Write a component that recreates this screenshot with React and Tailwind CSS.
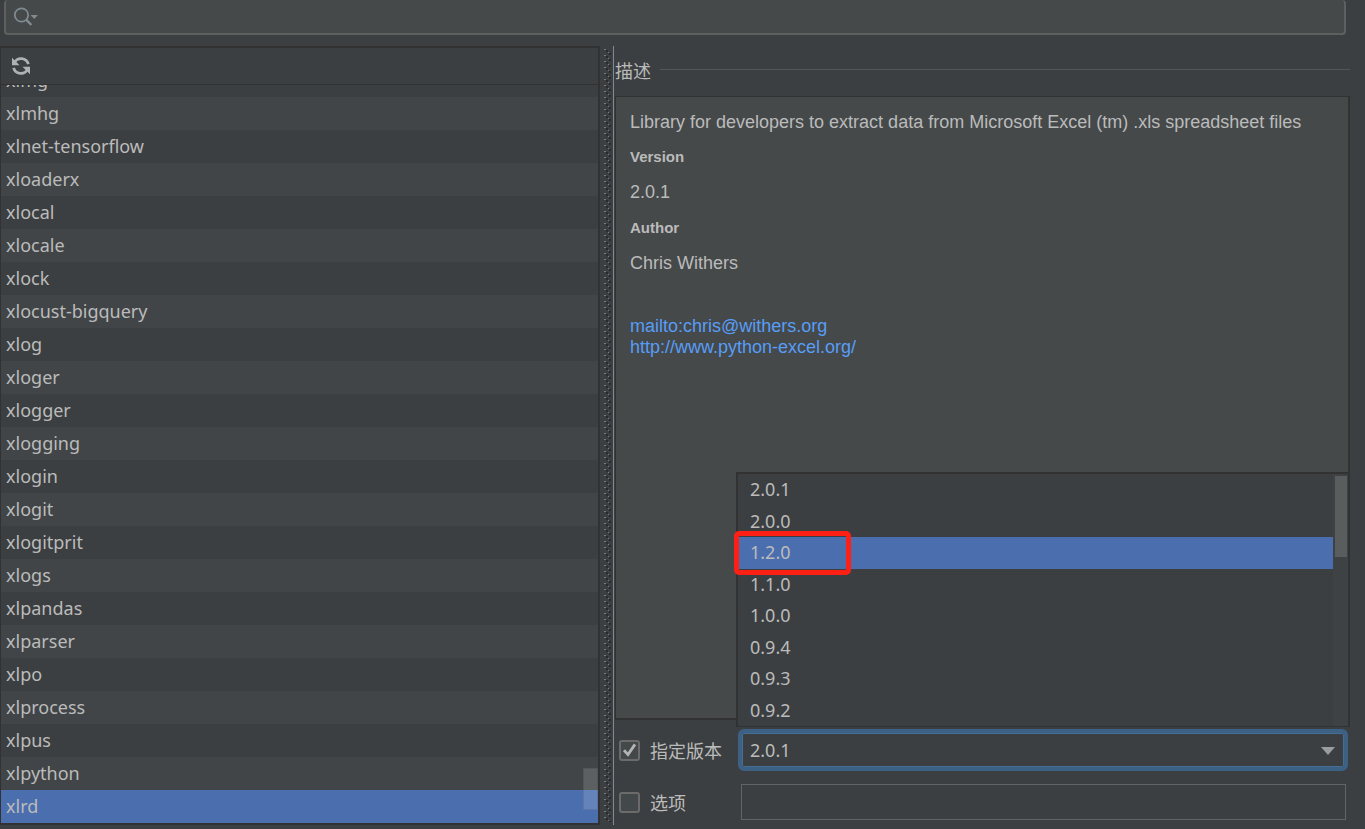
import React from "react";

const packages = [
  "xlmg", "xlmhg", "xlnet-tensorflow", "xloaderx", "xlocal", "xlocale", "xlock",
  "xlocust-bigquery", "xlog", "xloger", "xlogger", "xlogging", "xlogin", "xlogit",
  "xlogitprit", "xlogs", "xlpandas", "xlparser", "xlpo", "xlprocess", "xlpus",
  "xlpython", "xlrd",
];

const versions = ["2.0.1", "2.0.0", "1.2.0", "1.1.0", "1.0.0", "0.9.4", "0.9.3", "0.9.2"];

function SearchBar() {
  return (
    <div className="mr-[19px] ml-1 flex h-[35px] items-center rounded-[4px] border-2 border-t-0 border-[#5e6060] bg-[#45494a] pl-2">
      <svg className="h-5 w-7 shrink-0" viewBox="0 0 28 20" fill="none" aria-hidden="true">
        <circle cx="7.5" cy="8" r="6.7" stroke="#7f8b91" strokeWidth="1.7" />
        <path d="M12.3 12.8L17.4 18" stroke="#7f8b91" strokeWidth="2.4" />
        <path d="M16.5 8h7.5l-3.75 4z" fill="#7f8b91" />
      </svg>
      <input aria-label="Search packages" className="h-full min-w-0 flex-1 bg-transparent outline-none" />
    </div>
  );
}

function PackageList() {
  return (
    <section className="relative flex w-[600px] shrink-0 flex-col border-2 border-l border-[#323232]">
      <div className="flex h-[37px] items-center border-b border-[#323232] pl-[10px]">
        <button type="button" aria-label="Reload" className="block">
          <svg className="h-5 w-5" viewBox="0 0 20 20" aria-hidden="true">
            <path d="M3.4 6.6A7.6 7.6 0 0 1 17.4 8.2" fill="none" stroke="#afb1b3" strokeWidth="2.7" />
            <path d="M1 1.8V9.2H8.6z" fill="#afb1b3" />
            <path d="M16.6 13.4A7.6 7.6 0 0 1 2.6 11.8" fill="none" stroke="#afb1b3" strokeWidth="2.7" />
            <path d="M19 18.2V10.8H11.4z" fill="#afb1b3" />
          </svg>
        </button>
      </div>
      <ul className="flex h-[738px] flex-col justify-end overflow-hidden">
        {packages.map((name) => (
          <li
            key={name}
            className={
              name === "xlrd"
                ? "h-[33px] shrink-0 bg-[#4b6eaf] pl-[5px] leading-[33px]"
                : "h-[33px] shrink-0 pl-[5px] leading-[33px] even:bg-[#414547]"
            }
          >
            {name}
          </li>
        ))}
      </ul>
      <div className="absolute right-0 bottom-[13px] h-[42px] w-[15px] border border-black/10 bg-white/15" />
    </section>
  );
}

function Splitter() {
  return (
    <div className="flex w-[14px] shrink-0 justify-end border-r border-[#808b94] pt-[3px] pr-px pb-[3px]">
      <svg className="h-full w-2" aria-hidden="true">
        <defs>
          <pattern id="grip" width="8" height="6" patternUnits="userSpaceOnUse">
            <path d="M0 0h2v1H0zM4 3h1v1H4z" fill="#777b7d" />
            <path d="M2 1h2v2H2zM5 4h2v2H5z" fill="#2b2b2b" />
          </pattern>
        </defs>
        <rect width="8" height="100%" fill="url(#grip)" />
      </svg>
    </div>
  );
}

function Description() {
  return (
    <div className="mr-[15px] h-[624px] border-2 border-l border-t border-[#323232] bg-[#45494a] px-[14px] pt-[15px] font-['Liberation_Sans',sans-serif] text-[18px] leading-[21px]">
      <p>Library for developers to extract data from Microsoft Excel (tm) .xls spreadsheet files</p>
      <h3 className="mt-[13px] text-[15px] leading-[21px] font-bold">Version</h3>
      <p className="mt-[15px]">2.0.1</p>
      <h3 className="mt-[14px] text-[15px] leading-[21px] font-bold">Author</h3>
      <p className="mt-[15px]">Chris Withers</p>
      <p className="mt-[42px] flex flex-col items-start text-[#589df6]">
        <a href="mailto:chris@withers.org">mailto:chris@withers.org</a>
        <a href="http://www.python-excel.org/">http://www.python-excel.org/</a>
      </p>
    </div>
  );
}

function Check({ id, label, checked }) {
  return (
    <div className="flex w-[119px] shrink-0 items-center gap-[10px]">
      <span className="relative flex h-[21px] w-[21px]">
        <input
          id={id}
          type="checkbox"
          defaultChecked={checked}
          className="peer h-[21px] w-[21px] appearance-none rounded-[3px] border-2 border-[#6b6b6b] bg-[#43494a]"
        />
        <svg className="pointer-events-none absolute inset-0 hidden h-[21px] w-[21px] peer-checked:block" viewBox="0 0 21 21" fill="none" aria-hidden="true">
          <path d="M5 10.2L9 14.6L16 4.4" stroke="#b4b4b4" strokeWidth="2.8" />
        </svg>
      </span>
      <label htmlFor={id} className="pt-[2px] text-[18px] leading-6">{label}</label>
    </div>
  );
}

function VersionPopup() {
  return (
    <div className="absolute right-[-2px] bottom-full left-[-2px] mb-[2px] flex h-[255px] border-2 border-b border-[#323232] bg-[#3c3f41]">
      <ul className="flex flex-1 flex-col" role="listbox" aria-label="Versions">
        {versions.map((v) => (
          <li
            key={v}
            role="option"
            aria-selected={v === "1.2.0"}
            className="relative flex flex-1 items-center pl-3 aria-selected:bg-[#4b6eaf]"
          >
            {v}
            {v === "1.2.0" && (
              <span className="absolute top-[-6px] left-[-4px] h-[44px] w-[117px] rounded-[5px] border-5 border-[#ff2015]" />
            )}
          </li>
        ))}
      </ul>
      <div className="w-[15px] bg-[#3f4244] pt-[2px] pl-[2px]">
        <div className="h-[81px] w-3 bg-[#5a5d5e]" />
      </div>
    </div>
  );
}

export default function App() {
  return (
    <main className="flex min-h-screen flex-col bg-[#3c3f41] font-['Noto_Sans','Noto_Sans_CJK_SC',sans-serif] text-[18px] text-[#bbbbbb]">
      <SearchBar />
      <div className="mt-[11px] flex">
        <PackageList />
        <Splitter />
        <div className="min-w-0 flex-1 pl-px">
          <div className="mr-[15px] flex h-[50px] items-center gap-[9px]">
            <h2 className="text-[18px]">描述</h2>
            <div className="mb-[3px] h-px flex-1 bg-[#515658]" />
          </div>
          <Description />
          <div className="mt-[9px] mr-[17px] flex h-[42px] pl-1">
            <Check id="specify" label="指定版本" checked />
            <div className="relative flex-1">
              <select
                aria-label="Version"
                defaultValue="2.0.1"
                className="block h-[42px] w-full appearance-none rounded-[6px] border-4 border-[#3d6185] bg-[#3c3f41] pt-px pl-2 inset-ring inset-ring-[#466d94] outline-none"
              >
                {versions.map((v) => (
                  <option key={v}>{v}</option>
                ))}
              </select>
              <svg className="pointer-events-none absolute top-[18px] right-[13px] h-2 w-[14px]" viewBox="0 0 14 8" aria-hidden="true">
                <path d="M0 0h14L7 8z" fill="#9a9da0" />
              </svg>
              <VersionPopup />
            </div>
          </div>
          <div className="mt-[13px] mr-[19px] flex h-9 pl-1">
            <Check id="options" label="选项" />
            <input aria-label="Options" className="ml-[3px] min-w-0 flex-1 border border-[#646464] bg-[#3c3f41] px-2 outline-none" />
          </div>
        </div>
      </div>
    </main>
  );
}
